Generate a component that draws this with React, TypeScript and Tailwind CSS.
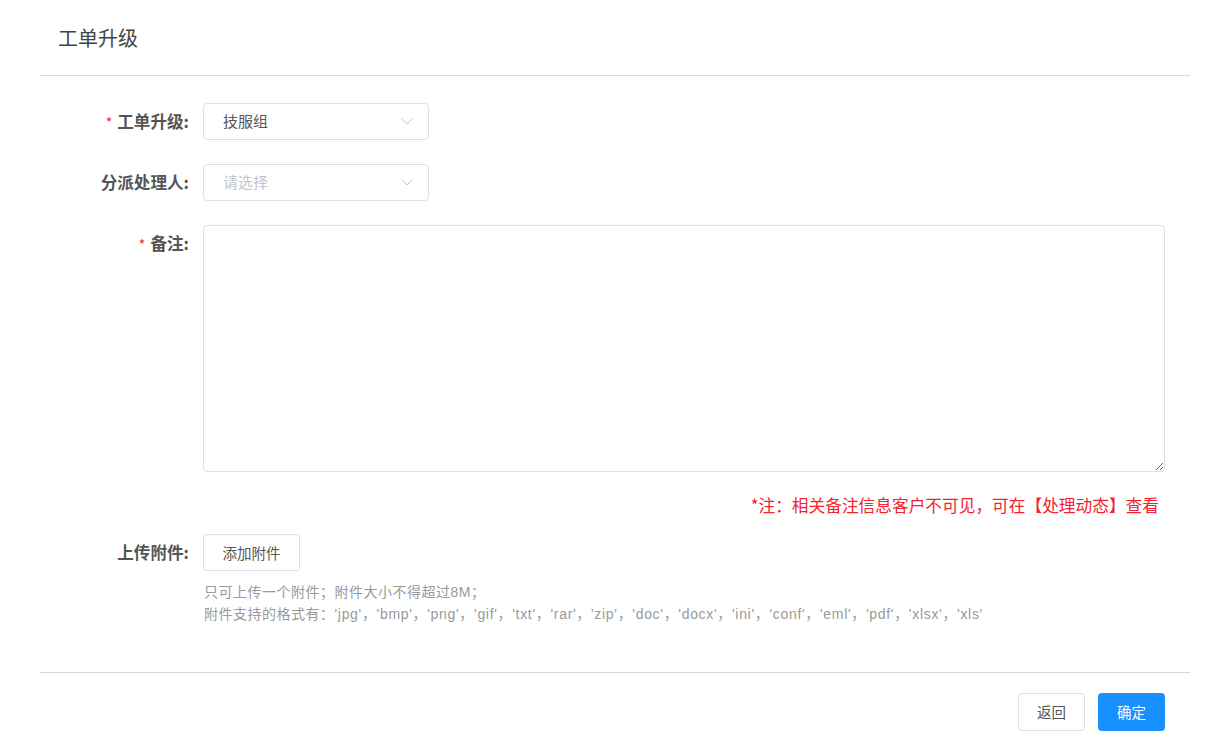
import React from "react";

const font = { fontFamily: '"Noto Sans CJK SC", "Noto Sans", "Liberation Sans", sans-serif' };
const latinFont = { fontFamily: '"Liberation Sans", "Noto Sans CJK SC", sans-serif' };

function Chevron() {
  return (
    <svg width="12" height="7" viewBox="0 0 12 7" fill="none">
      <path d="M0.5 0.5 L6 6 L11.5 0.5" stroke="#c8c9cc" strokeWidth="1" />
    </svg>
  );
}

function Select({ value, placeholder }: { value?: string; placeholder?: string }) {
  return (
    <div className="w-[226px] h-[37px] border border-[#dcdfe6] rounded-[4px] flex items-center justify-between pl-[19px] pr-[15px] bg-white">
      {value ? (
        <span className="text-[15px] text-[#555]">{value}</span>
      ) : (
        <span className="text-[15px] text-[#c0c4cc]">{placeholder}</span>
      )}
      <Chevron />
    </div>
  );
}

function Label({ text, required }: { text: string; required?: boolean }) {
  return (
    <div className="w-[163px] shrink-0 pr-[14px] flex justify-end items-center h-[37px]">
      {required && <span className="text-[#f5222d] text-[14px] mr-[5px] leading-none">*</span>}
      <span className="text-[16.6px] font-bold text-[#555]">{text}</span>
    </div>
  );
}

export default function App() {
  const formats = "'jpg'，'bmp'，'png'，'gif'，'txt'，'rar'，'zip'，'doc'，'docx'，'ini'，'conf'，'eml'，'pdf'，'xlsx'，'xls'";
  return (
    <div className="w-[1218px] h-[748px] bg-white pl-[40px] pr-[28px]" style={font}>
      <div className="h-[76px] border-b border-[#d9d9d9] pl-[18px] pt-[24px]">
        <div className="text-[20px] text-[#444] leading-[28px]">工单升级</div>
      </div>

      <div className="pt-[27px]">
        <div className="flex items-center">
          <Label text="工单升级:" required />
          <Select value="技服组" />
        </div>
        <div className="flex items-center mt-[24px]">
          <Label text="分派处理人:" />
          <Select placeholder="请选择" />
        </div>
        <div className="flex items-start mt-[24px]">
          <Label text="备注:" required />
          <textarea className="block w-[962px] h-[247px] border border-[#dcdfe6] rounded-[4px] outline-none resize-y bg-white" />
        </div>
        <div className="flex justify-end w-[1119px] mt-[21px]">
          <span className="text-[16.7px] text-[#f5222d] leading-[24px]">*注：相关备注信息客户不可见，可在【处理动态】查看</span>
        </div>
        <div className="flex items-center mt-[17px]">
          <Label text="上传附件:" />
          <button className="w-[97px] h-[37px] border border-[#dcdfe6] rounded-[3px] bg-white text-[14.5px] text-[#555]">添加附件</button>
        </div>
        <div className="pl-[164px] pt-[10px] text-[14px] text-[#999] leading-[22px] tracking-[0.5px]" style={latinFont}>
          <div>只可上传一个附件；附件大小不得超过8M；</div>
          <div>
            附件支持的格式有：<span className="tracking-[0.68px]">{formats}</span>
          </div>
        </div>
      </div>

      <div className="mt-[47px] border-t border-[#d9d9d9] flex justify-end gap-[13px] pr-[25px] pt-[20px]">
        <button className="w-[67px] h-[38px] border border-[#dcdfe6] rounded-[4px] bg-white text-[14.5px] text-[#555]">返回</button>
        <button className="w-[67px] h-[38px] rounded-[4px] bg-[#1890ff] text-[14.5px] text-white">确定</button>
      </div>
    </div>
  );
}
